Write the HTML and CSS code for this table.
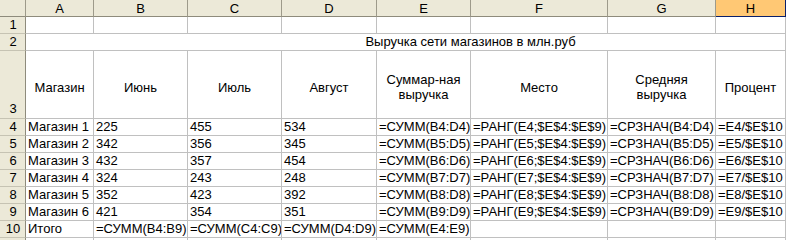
FILE: index.html
```html
<!DOCTYPE html>
<html lang="ru">
<head>
<meta charset="utf-8">
<title>Выручка сети магазинов</title>
<link rel="stylesheet" href="styles.css">
</head>
<body>
<div class="sheet">
  <div class="corner"></div>
  <div class="ch">A</div><div class="ch">B</div><div class="ch">C</div><div class="ch">D</div><div class="ch">E</div><div class="ch">F</div><div class="ch">G</div><div class="ch sel">H</div>

  <div class="rh">1</div>
  <div class="c"></div><div class="c"></div><div class="c"></div><div class="c"></div><div class="c"></div><div class="c"></div><div class="c"></div><div class="c"></div>

  <div class="rh">2</div>
  <div class="c title">Выручка сети магазинов в млн.руб</div>

  <div class="rh rh-tall">3</div>
  <div class="c hd">Магазин</div>
  <div class="c hd">Июнь</div>
  <div class="c hd">Июль</div>
  <div class="c hd">Август</div>
  <div class="c hd">Суммар-ная<br>выручка</div>
  <div class="c hd">Место</div>
  <div class="c hd">Средняя<br>выручка</div>
  <div class="c hd">Процент</div>

  <div class="rh">4</div>
  <div class="c">Магазин 1</div><div class="c">225</div><div class="c">455</div><div class="c">534</div><div class="c">=СУММ(B4:D4)</div><div class="c">=РАНГ(E4;$E$4:$E$9)</div><div class="c">=СРЗНАЧ(B4:D4)</div><div class="c">=E4/$E$10</div>

  <div class="rh">5</div>
  <div class="c">Магазин 2</div><div class="c">342</div><div class="c">356</div><div class="c">345</div><div class="c">=СУММ(B5:D5)</div><div class="c">=РАНГ(E5;$E$4:$E$9)</div><div class="c">=СРЗНАЧ(B5:D5)</div><div class="c">=E5/$E$10</div>

  <div class="rh">6</div>
  <div class="c">Магазин 3</div><div class="c">432</div><div class="c">357</div><div class="c">454</div><div class="c">=СУММ(B6:D6)</div><div class="c">=РАНГ(E6;$E$4:$E$9)</div><div class="c">=СРЗНАЧ(B6:D6)</div><div class="c">=E6/$E$10</div>

  <div class="rh">7</div>
  <div class="c">Магазин 4</div><div class="c">324</div><div class="c">243</div><div class="c">248</div><div class="c">=СУММ(B7:D7)</div><div class="c">=РАНГ(E7;$E$4:$E$9)</div><div class="c">=СРЗНАЧ(B7:D7)</div><div class="c">=E7/$E$10</div>

  <div class="rh">8</div>
  <div class="c">Магазин 5</div><div class="c">352</div><div class="c">423</div><div class="c">392</div><div class="c">=СУММ(B8:D8)</div><div class="c">=РАНГ(E8;$E$4:$E$9)</div><div class="c">=СРЗНАЧ(B8:D8)</div><div class="c">=E8/$E$10</div>

  <div class="rh">9</div>
  <div class="c">Магазин 6</div><div class="c">421</div><div class="c">354</div><div class="c">351</div><div class="c">=СУММ(B9:D9)</div><div class="c">=РАНГ(E9;$E$4:$E$9)</div><div class="c">=СРЗНАЧ(B9:D9)</div><div class="c">=E9/$E$10</div>

  <div class="rh">10</div>
  <div class="c">Итого</div><div class="c">=СУММ(B4:B9)</div><div class="c">=СУММ(C4:C9)</div><div class="c">=СУММ(D4:D9)</div><div class="c">=СУММ(E4:E9)</div><div class="c"></div><div class="c"></div><div class="c"></div>

  <div class="rh rh-cut"></div>
  <div class="c cut"></div><div class="c cut"></div><div class="c cut"></div><div class="c cut"></div><div class="c cut"></div><div class="c cut"></div><div class="c cut"></div><div class="c cut"></div>
</div>
</body>
</html>
```

FILE: styles.css
```css
html, body {
  margin: 0;
  padding: 0;
  background: #ffffff;
  overflow: hidden;
}

.sheet {
  display: grid;
  grid-template-columns: 26px 68px 94px 94px 95px 94px 137px 108px 70px;
  grid-template-rows: 17px 17px 17px 68px repeat(7, 17px) 2px;
  width: 786px;
  font-family: "Liberation Sans", Arial, sans-serif;
  font-size: 13px;
  color: #000000;
}

.sheet > div {
  box-sizing: border-box;
  white-space: nowrap;
  overflow: hidden;
}

.corner,
.ch {
  background: #ece9d8;
  border-right: 1px solid #9d9a8a;
  border-bottom: 1px solid #8e8b7c;
}

.ch {
  text-align: center;
  padding-top: 2px;
  line-height: 14px;
}

.ch.sel {
  background: #ffc874;
  border-right-color: #0a1f6a;
  border-bottom-color: #0a1f6a;
}

.rh {
  background: #ece9d8;
  border-right: 1px solid #8e8b7c;
  border-bottom: 1px solid #c6c3b3;
  text-align: center;
  line-height: 16px;
  padding-left: 1px;
}

.rh-tall {
  display: flex;
  align-items: flex-end;
  justify-content: center;
  padding-bottom: 1px;
}

.c {
  background: #ffffff;
  border-right: 1px solid #c0c0c0;
  border-bottom: 1px solid #c0c0c0;
  line-height: 16px;
  padding: 0 2px;
}

.rh-cut,
.cut {
  border-bottom: 0;
}

.title {
  grid-column: 2 / span 8;
  text-align: center;
  padding-left: 132px;
}

.hd {
  display: flex;
  align-items: center;
  justify-content: center;
  text-align: center;
  line-height: 15px;
  padding-top: 5px;
}
```
